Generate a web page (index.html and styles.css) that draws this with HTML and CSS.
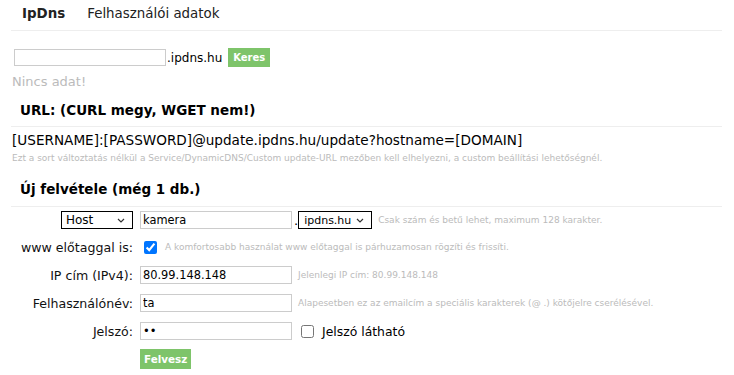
FILE: index.html
```html
<!DOCTYPE html>
<html lang="hu">
<head>
  <meta charset="UTF-8" />
  <title>IpDns</title>
  <link rel="stylesheet" href="styles.css">
</head>
<body>
  <div class="page">
    <nav class="nav">
      <a class="brand">IpDns</a>
      <a class="nav-link">Felhasználói adatok</a>
    </nav>

    <div class="search-row">
      <input type="text" class="search-input" />
      <span class="suffix">.ipdns.hu</span>
      <button class="btn">Keres</button>
    </div>
    <div class="empty">Nincs adat!</div>

    <h3 class="section-title">URL: (CURL megy, WGET nem!)</h3>
    <div class="url">[USERNAME]:[PASSWORD]@update.ipdns.hu/update?hostname=[DOMAIN]</div>
    <div class="note">Ezt a sort változtatás nélkül a Service/DynamicDNS/Custom update-URL mezőben kell elhelyezni, a custom beállítási lehetőségnél.</div>

    <h3 class="section-title section-new">Új felvétele (még 1 db.)</h3>
    <div class="form">
      <div class="row row-first">
        <div class="label">
          <select class="sel sel-type">
            <option>Host</option>
          </select>
        </div>
        <input type="text" class="field" value="kamera" />
        <span class="dot">.</span>
        <select class="sel sel-domain">
          <option>ipdns.hu</option>
        </select>
        <span class="hint">Csak szám és betű lehet, maximum 128 karakter.</span>
      </div>
      <div class="row">
        <div class="label">www előtaggal is:</div>
        <input type="checkbox" class="check" checked />
        <span class="hint hint-check">A komfortosabb használat www előtaggal is párhuzamosan rögzíti és frissíti.</span>
      </div>
      <div class="row">
        <div class="label">IP cím (IPv4):</div>
        <input type="text" class="field" value="80.99.148.148" />
        <span class="hint">Jelenlegi IP cím: 80.99.148.148</span>
      </div>
      <div class="row">
        <div class="label">Felhasználónév:</div>
        <input type="text" class="field" value="ta" />
        <span class="hint">Alapesetben ez az emailcím a speciális karakterek (@ .) kötőjelre cserélésével.</span>
      </div>
      <div class="row">
        <div class="label">Jelszó:</div>
        <input type="password" class="field" value="ta" />
        <label class="show-pass"><input type="checkbox" class="check-plain" /> Jelszó látható</label>
      </div>
      <div class="row">
        <div class="label"></div>
        <button class="btn btn-add">Felvesz</button>
      </div>
    </div>
  </div>
</body>
</html>
```

FILE: styles.css
```css
body {
  margin: 0;
  font-family: "DejaVu Sans", Verdana, sans-serif;
  font-size: 13px;
  color: #000;
  background: #fff;
}
.page {
  margin: 0 12px 0 11px;
}
.nav {
  display: flex;
  height: 27px;
  padding-bottom: 3px;
  align-items: center;
  border-bottom: 1px solid #eee;
  font-size: 13.4px;
}
.nav a {
  color: #222;
  text-decoration: none;
}
.brand {
  font-weight: bold;
  margin-left: 11px;
  margin-right: 22px;
}
.search-row {
  display: flex;
  align-items: center;
  margin-top: 17px;
  padding-left: 3px;
}
.search-input {
  width: 152px;
  height: 17px;
  box-sizing: border-box;
  border: 1px solid #ccc;
  padding: 0 3px;
  margin: 0;
}
.suffix {
  margin-left: 1px;
  font-size: 12px;
}
.btn {
  background: #7ec46a;
  color: #fff;
  border: none;
  font-family: "DejaVu Sans", Verdana, sans-serif;
  font-weight: bold;
  font-size: 10px;
  padding: 0 5px;
  height: 19px;
  margin-left: 6px;
  cursor: pointer;
}
.empty {
  color: #bbb;
  font-size: 13px;
  margin-top: 7px;
  padding-left: 1px;
}
.section-title {
  font-size: 13.5px;
  font-weight: bold;
  margin: 13px 0 0;
  padding: 0 0 8px 9px;
  border-bottom: 1px solid #eee;
}
.url {
  margin-top: 5px;
  padding-left: 1px;
  font-size: 13.6px;
}
.note {
  color: #bbb;
  font-size: 9px;
  margin-top: 5px;
  padding-left: 1px;
}
.section-new {
  margin-top: 18px;
  padding-bottom: 9px;
}
.form {
  padding-top: 0;
}
.row {
  display: flex;
  align-items: center;
  min-height: 28px;
}
.row-first {
  min-height: 26px;
}
.label {
  width: 122px;
  text-align: right;
  margin-right: 7px;
  display: flex;
  justify-content: flex-end;
  font-size: 12.6px;
  color: #111;
}
.field {
  width: 152px;
  height: 18px;
  box-sizing: border-box;
  border: 1px solid #ccc;
  padding: 0 2px;
  margin: 0;
  font-family: "DejaVu Sans", Verdana, sans-serif;
  font-size: 11.4px;
}
.sel {
  appearance: none;
  height: 18px;
  box-sizing: border-box;
  border: 1px solid #000;
  background: #fff url("data:image/svg+xml,%3Csvg xmlns='http://www.w3.org/2000/svg' width='8' height='5' viewBox='0 0 8 5'%3E%3Cpath d='M1 1l3 3 3-3' fill='none' stroke='%23333' stroke-width='1.2'/%3E%3C/svg%3E") no-repeat right 7px center;
  font-family: "DejaVu Sans", Verdana, sans-serif;
  font-size: 12px;
  color: #000;
  padding: 0 4px;
  margin: 0;
}
.sel-type {
  width: 72px;
}
.sel-domain {
  width: 74px;
  padding-left: 5px;
  font-size: 11px;
}
.dot {
  margin: 0 0 0 2px;
}
.hint {
  color: #bbb;
  font-size: 9px;
  margin-left: 6px;
}
.check {
  width: 13px;
  height: 13px;
  margin: 0 0 0 4px;
}
.hint-check {
  margin-left: 8px;
}
.show-pass {
  display: flex;
  align-items: center;
  margin-left: 9px;
  font-size: 12.4px;
}
.check-plain {
  width: 13px;
  height: 13px;
  margin: 0 8px 0 0;
}
.btn-add {
  margin-left: 0;
  height: 20px;
  padding: 0 4px;
  font-size: 10.4px;
}
```
